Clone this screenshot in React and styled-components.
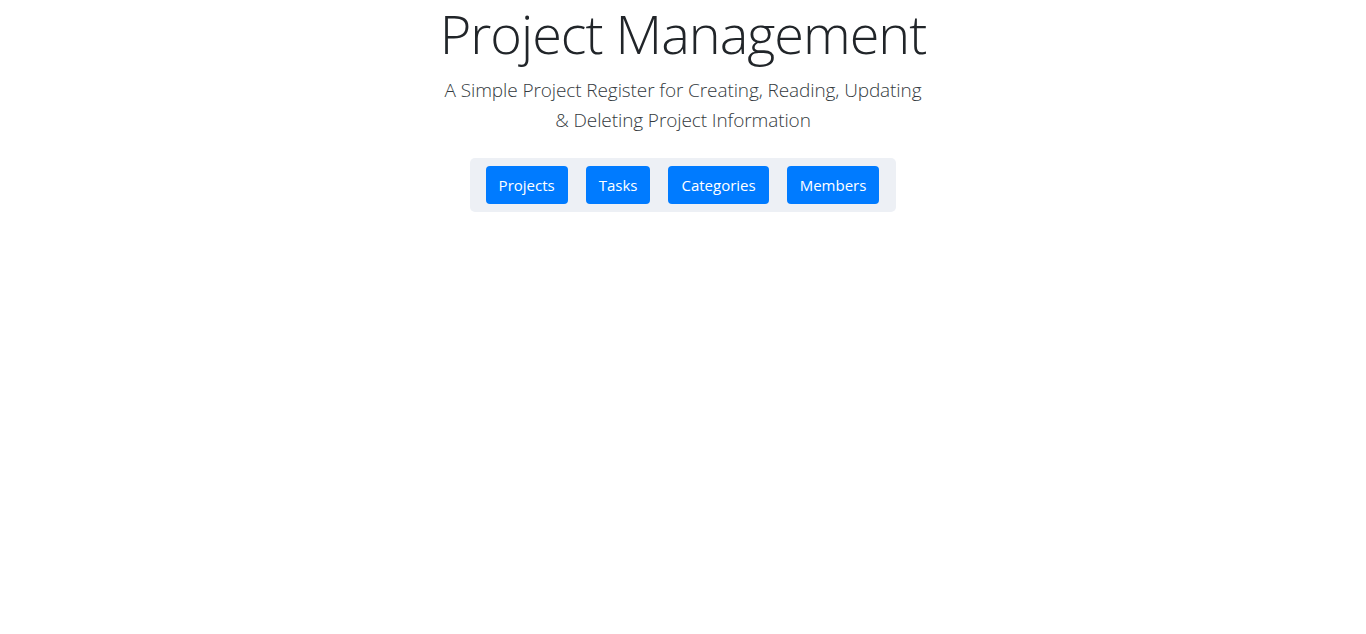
import styled, { createGlobalStyle } from "styled-components";

const GlobalStyle = createGlobalStyle`
    body {
        margin: 0;
        background: #fff;
        font-family: "Open Sans", "Noto Sans", sans-serif;
        color: #212529;
    }
`;

const links = ["Projects", "Tasks", "Categories", "Members"];

export default function App() {
    return (
        <>
            <GlobalStyle />
            <Page>
                <Title>Project Management</Title>
                <Lead>
                    A Simple Project Register for Creating, Reading, Updating
                    <br />& Deleting Project Information
                </Lead>
                <NavBox>
                    {links.map((l) => (
                        <NavButton key={l}>{l}</NavButton>
                    ))}
                </NavBox>
            </Page>
        </>
    );
}

const Page = styled.div`
    display: flex;
    flex-direction: column;
    align-items: center;
`;

const Title = styled.h1`
    margin: 0;
    font-size: 54px;
    font-weight: 300;
    line-height: 67px;
    letter-spacing: -1px;
    color: #212529;
`;

const Lead = styled.p`
    margin: 8px 0 0;
    font-size: 19px;
    font-weight: 300;
    line-height: 30px;
    letter-spacing: -0.1px;
    text-align: center;
    color: #343a40;
`;

const NavBox = styled.nav`
    display: flex;
    gap: 18px;
    margin-top: 23px;
    padding: 8px 17px 8px 16px;
    background: #edf0f5;
    border-radius: 5px;
`;

const NavButton = styled.button`
    border: none;
    background: #007bff;
    color: #fff;
    font-family: inherit;
    font-size: 15px;
    line-height: 26px;
    padding: 6px 13px;
    border-radius: 4px;
    cursor: pointer;
`;
